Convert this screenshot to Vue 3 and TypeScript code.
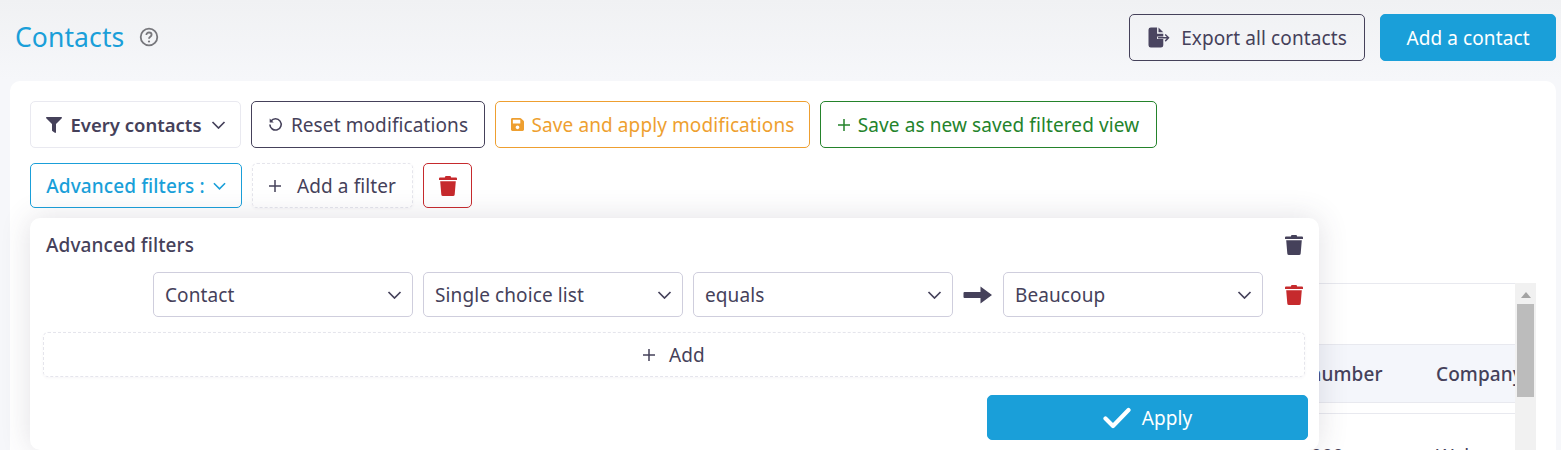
<template>
  <div class="page">
    <header class="top">
      <h1 class="title">Contacts</h1>
      <svg class="help" viewBox="0 0 20 20" width="20" height="20">
        <circle cx="10" cy="10" r="8.300" fill="none" stroke="#77777c" stroke-width="1.800" />
        <path d="M7.400 8c0-1.600 1.200-2.500 2.600-2.500s2.600.9 2.600 2.300c0 2-2.600 2-2.600 3.900" fill="none" stroke="#77777c" stroke-width="1.800" />
        <circle cx="10" cy="14.500" r="1.100" fill="#77777c" />
      </svg>
      <div class="top-actions">
        <button class="btn btn-export">
          <svg viewBox="0 0 24 22" width="24" height="21">
            <path d="M1 3a2.500 2.500 0 0 1 2.500-2.500H10V7h6.500v3H10v2.500h6.500V19a2.500 2.500 0 0 1-2.500 2.500H3.500A2.500 2.500 0 0 1 1 19z" fill="#4a4560" />
            <path d="M11.500.5l5 5h-5z" fill="#4a4560" />
            <path d="M11 11.300h11M18.500 7.800l3.500 3.500-3.500 3.500" fill="none" stroke="#4a4560" stroke-width="1.500" />
          </svg>
          Export all contacts
        </button>
        <button class="btn btn-primary btn-add">Add a contact</button>
      </div>
    </header>

    <main class="card">
      <div class="toolbar">
        <button class="btn btn-view">
          <svg viewBox="0 0 512 512" width="16" height="16"><path fill="#45415a" d="M487.976 0H24.028C2.710 0-8.047 25.866 7.058 40.971L192 225.941V432c0 7.831 3.821 15.170 10.237 19.662l80 55.980C298.020 518.690 320 507.493 320 487.980V225.941l184.947-184.970C520.021 25.896 509.338 0 487.976 0z" /></svg>
          <strong>Every contacts</strong>
          <svg class="chev" viewBox="0 0 14 8" width="15" height="8"><path d="M1 1l6 6 6-6" /></svg>
        </button>
        <button class="btn btn-reset">
          <svg viewBox="0 0 16 16" width="15" height="15">
            <path d="M3.200 4.300A6 6 0 1 1 2 8" fill="none" stroke="#45415a" stroke-width="1.700" />
            <path d="M1.800 1.500v4.300h4.300z" fill="#45415a" />
          </svg>
          Reset modifications
        </button>
        <button class="btn btn-save">
          <svg viewBox="0 0 448 512" width="13" height="15"><path fill="#ee9f30" d="M433.941 129.941l-83.882-83.882A48 48 0 0 0 316.118 32H48C21.490 32 0 53.490 0 80v352c0 26.510 21.490 48 48 48h352c26.510 0 48-21.490 48-48V163.882a48 48 0 0 0-14.059-33.941zM224 416c-35.346 0-64-28.654-64-64 0-35.346 28.654-64 64-64s64 28.654 64 64c0 35.346-28.654 64-64 64zm96-304.520V212c0 6.627-5.373 12-12 12H76c-6.627 0-12-5.373-12-12V108c0-6.627 5.373-12 12-12h228.520c3.183 0 6.235 1.264 8.485 3.515l3.480 3.480A11.996 11.996 0 0 1 320 111.480z" /></svg>
          Save and apply modifications
        </button>
        <button class="btn btn-new">
          <svg class="plus" viewBox="0 0 12 12" width="12" height="12"><path d="M6 0v12M0 6h12" /></svg>
          Save as new saved filtered view
        </button>
      </div>

      <div class="toolbar second">
        <button class="btn btn-advanced">
          Advanced filters :
          <svg class="chev" viewBox="0 0 14 8" width="13" height="8"><path d="M1 1l6 6 6-6" /></svg>
        </button>
        <button class="btn btn-dashed btn-filter">
          <svg class="plus" viewBox="0 0 12 12" width="12" height="12"><path d="M6 0v12M0 6h12" /></svg>
          Add a filter
        </button>
        <button class="btn btn-trash">
          <svg class="trash" viewBox="0 0 18 20" width="18" height="20"><path :d="trashPath" fill="#c62a2d" /></svg>
        </button>
      </div>

      <section class="table-wrap">
        <div class="table">
          <div class="row head">
            <span class="cell-phone">Phone number</span>
            <span class="cell-company">Company</span>
          </div>
          <div class="row body">
            <span class="cell-phone">06 000 000</span>
            <span class="cell-company">Welcome</span>
          </div>
        </div>
        <div class="scrollbar">
          <span class="arrow"></span>
          <span class="thumb"></span>
        </div>
      </section>

      <section class="panel">
        <div class="panel-head">
          <h2>Advanced filters</h2>
          <svg class="trash" viewBox="0 0 18 20" width="18" height="20"><path :d="trashPath" fill="#45415a" /></svg>
        </div>
        <div class="filter-row">
          <template v-for="(sel, i) in selects" :key="sel">
            <svg v-if="i === 3" class="arrow-right" viewBox="0 0 30 20" width="30" height="20">
              <path d="M1.500 7h16V1.500l11.500 8.500-11.500 8.500V13h-16a1 1 0 0 1-1-1V8a1 1 0 0 1 1-1z" fill="#45415a" />
            </svg>
            <div class="select">
              <span>{{ sel }}</span>
              <svg class="chev" viewBox="0 0 14 8" width="15" height="8"><path d="M1 1l6 6 6-6" /></svg>
            </div>
          </template>
          <svg class="trash row-trash" viewBox="0 0 18 20" width="18" height="20"><path :d="trashPath" fill="#c62a2d" /></svg>
        </div>
        <button class="btn btn-dashed btn-more">
          <svg class="plus" viewBox="0 0 12 12" width="12" height="12"><path d="M6 0v12M0 6h12" /></svg>
          Add
        </button>
        <div class="panel-foot">
          <button class="btn btn-primary btn-apply">
            <svg viewBox="0 0 28 22" width="28" height="22"><path d="M2.500 11.500l7.500 7.500L25.500 3" fill="none" stroke="#fff" stroke-width="4.200" stroke-linecap="round" stroke-linejoin="round" /></svg>
            Apply
          </button>
        </div>
      </section>
    </main>
  </div>
</template>

<script setup lang="ts">
const selects: string[] = ['Contact', 'Single choice list', 'equals', 'Beaucoup']

const trashPath =
  'M6.500 0h5l.7 1.500H17a1 1 0 0 1 1 1V4H0V2.500a1 1 0 0 1 1-1h4.800zM1.200 5.200h15.600l-1.100 13.200a1.700 1.700 0 0 1-1.700 1.600H4a1.700 1.700 0 0 1-1.700-1.600z'
</script>

<style scoped>
.page {
  height: 450px;
  overflow: hidden;
  box-sizing: border-box;
  background: linear-gradient(#f0f1f3, #f6f7fa 80px);
  font-family: "Noto Sans", sans-serif;
  font-size: 19px;
  letter-spacing: 0.1px;
  color: #45415a;
}

.top {
  display: flex;
  align-items: center;
  height: 81px;
  box-sizing: border-box;
  padding: 0 5px 7px 15px;
}

.title {
  margin: 0;
  font-size: 26.500px;
  font-weight: 400;
  color: #1a9fd9;
}

.help {
  margin-left: 15px;
}

.top-actions {
  display: flex;
  gap: 15px;
  margin-left: auto;
}

.btn {
  display: flex;
  align-items: center;
  justify-content: center;
  box-sizing: border-box;
  height: 47px;
  border: 1px solid #45415a;
  border-radius: 5px;
  background: transparent;
  font: inherit;
  letter-spacing: inherit;
  color: inherit;
  cursor: pointer;
  padding: 0;
}

.btn-export {
  width: 236px;
  gap: 10px;
  padding-top: 1px;
}

.btn-primary {
  border-color: #1a9fd9;
  background: #1a9fd9;
  color: #fff;
}

.btn-add {
  width: 176px;
  padding-top: 1px;
}

.card {
  position: relative;
  margin: 0 5px 0 10px;
  height: 400px;
  box-sizing: border-box;
  padding: 20px;
  background: #fff;
  border-radius: 10px;
}

.toolbar {
  display: flex;
  gap: 10px;
}

.second {
  margin-top: 15px;
}

.chev {
  fill: none;
  stroke: #45415a;
  stroke-width: 1.700;
}

.plus {
  fill: none;
  stroke: #45415a;
  stroke-width: 1.500;
}

.btn-view {
  width: 211px;
  gap: 9px;
  border-color: #e9e9f0;
}

.btn-view strong {
  font-size: 18.500px;
  font-weight: 600;
  letter-spacing: 0;
}

.btn-reset {
  width: 234px;
  gap: 8px;
}

.btn-save {
  width: 315px;
  gap: 8px;
  border-color: #ee9f30;
  color: #ee9f30;
}

.btn-new {
  width: 337px;
  gap: 8px;
  border-color: #24832b;
  color: #24832b;
}

.btn-new .plus {
  stroke: #24832b;
}

.second .btn {
  height: 45px;
}

.btn-advanced {
  width: 212px;
  gap: 8px;
  border-color: #1a9fd9;
  color: #1a9fd9;
  font-weight: 500;
}

.btn-advanced .chev {
  stroke: #1a9fd9;
}

.btn-dashed {
  border: 1px dashed #e5e5ec;
  box-shadow: 0 1px 3px rgba(69, 65, 90, 0.05);
}

.btn-filter {
  width: 161px;
  gap: 16px;
}

.btn-trash {
  width: 49px;
  border-color: #c62a2d;
}

.table-wrap {
  display: flex;
  margin-top: 75px;
  height: 200px;
}

.table {
  flex: 1;
  min-width: 0;
  overflow: hidden;
  border-top: 1px solid #e8e9ef;
}

.row {
  display: grid;
  grid-template-columns: 1fr 190px 79px;
  white-space: nowrap;
}

.head {
  margin-top: 60px;
  height: 56px;
  padding-top: 1px;
  align-items: center;
  background: #f4f6fb;
  border-top: 1px solid #e8e9ef;
  border-bottom: 1px solid #e8e9ef;
  font-weight: 500;
}

.body {
  margin-top: 10px;
  padding-top: 29px;
  border-top: 1px solid #e8e9ef;
}

.cell-phone {
  grid-column: 2;
}

.cell-company {
  grid-column: 3;
}

.scrollbar {
  display: flex;
  flex-direction: column;
  align-items: center;
  width: 21px;
  background: #f1f1f1;
}

.arrow {
  margin-top: 9px;
  border: 5px solid transparent;
  border-top: 0;
  border-bottom: 6px solid #a3a3a3;
}

.thumb {
  width: 17px;
  height: 93px;
  margin-top: 6px;
  background: #bcbcbc;
}

.panel {
  position: absolute;
  left: 20px;
  top: 137px;
  width: 1289px;
  height: 232px;
  box-sizing: border-box;
  padding: 13px 11px 0 13px;
  background: #fff;
  border-radius: 10px;
  box-shadow: 0 0 30px rgba(69, 65, 90, 0.16);
}

.panel-head {
  display: flex;
  align-items: center;
  justify-content: space-between;
  height: 28px;
  padding: 0 5px 0 3px;
}

.panel-head h2 {
  margin: 0;
  font-size: 19px;
  font-weight: 500;
}

.filter-row {
  display: flex;
  align-items: center;
  gap: 10px;
  margin-top: 13px;
  padding-left: 110px;
}

.select {
  display: flex;
  align-items: center;
  justify-content: space-between;
  box-sizing: border-box;
  width: 260px;
  height: 45px;
  padding: 0 10px 0 11px;
  border: 1px solid #cfcedd;
  border-radius: 5px;
}

.row-trash {
  margin-left: 12px;
}

.btn-more {
  width: 1262px;
  height: 45px;
  gap: 14px;
  margin-top: 15px;
  padding-top: 1px;
}

.panel-foot {
  display: flex;
  justify-content: flex-end;
  margin-top: 18px;
}

.btn-apply {
  width: 321px;
  height: 45px;
  gap: 11px;
}
</style>

<style>
html,
body {
  margin: 0;
  overflow: hidden;
}
</style>
